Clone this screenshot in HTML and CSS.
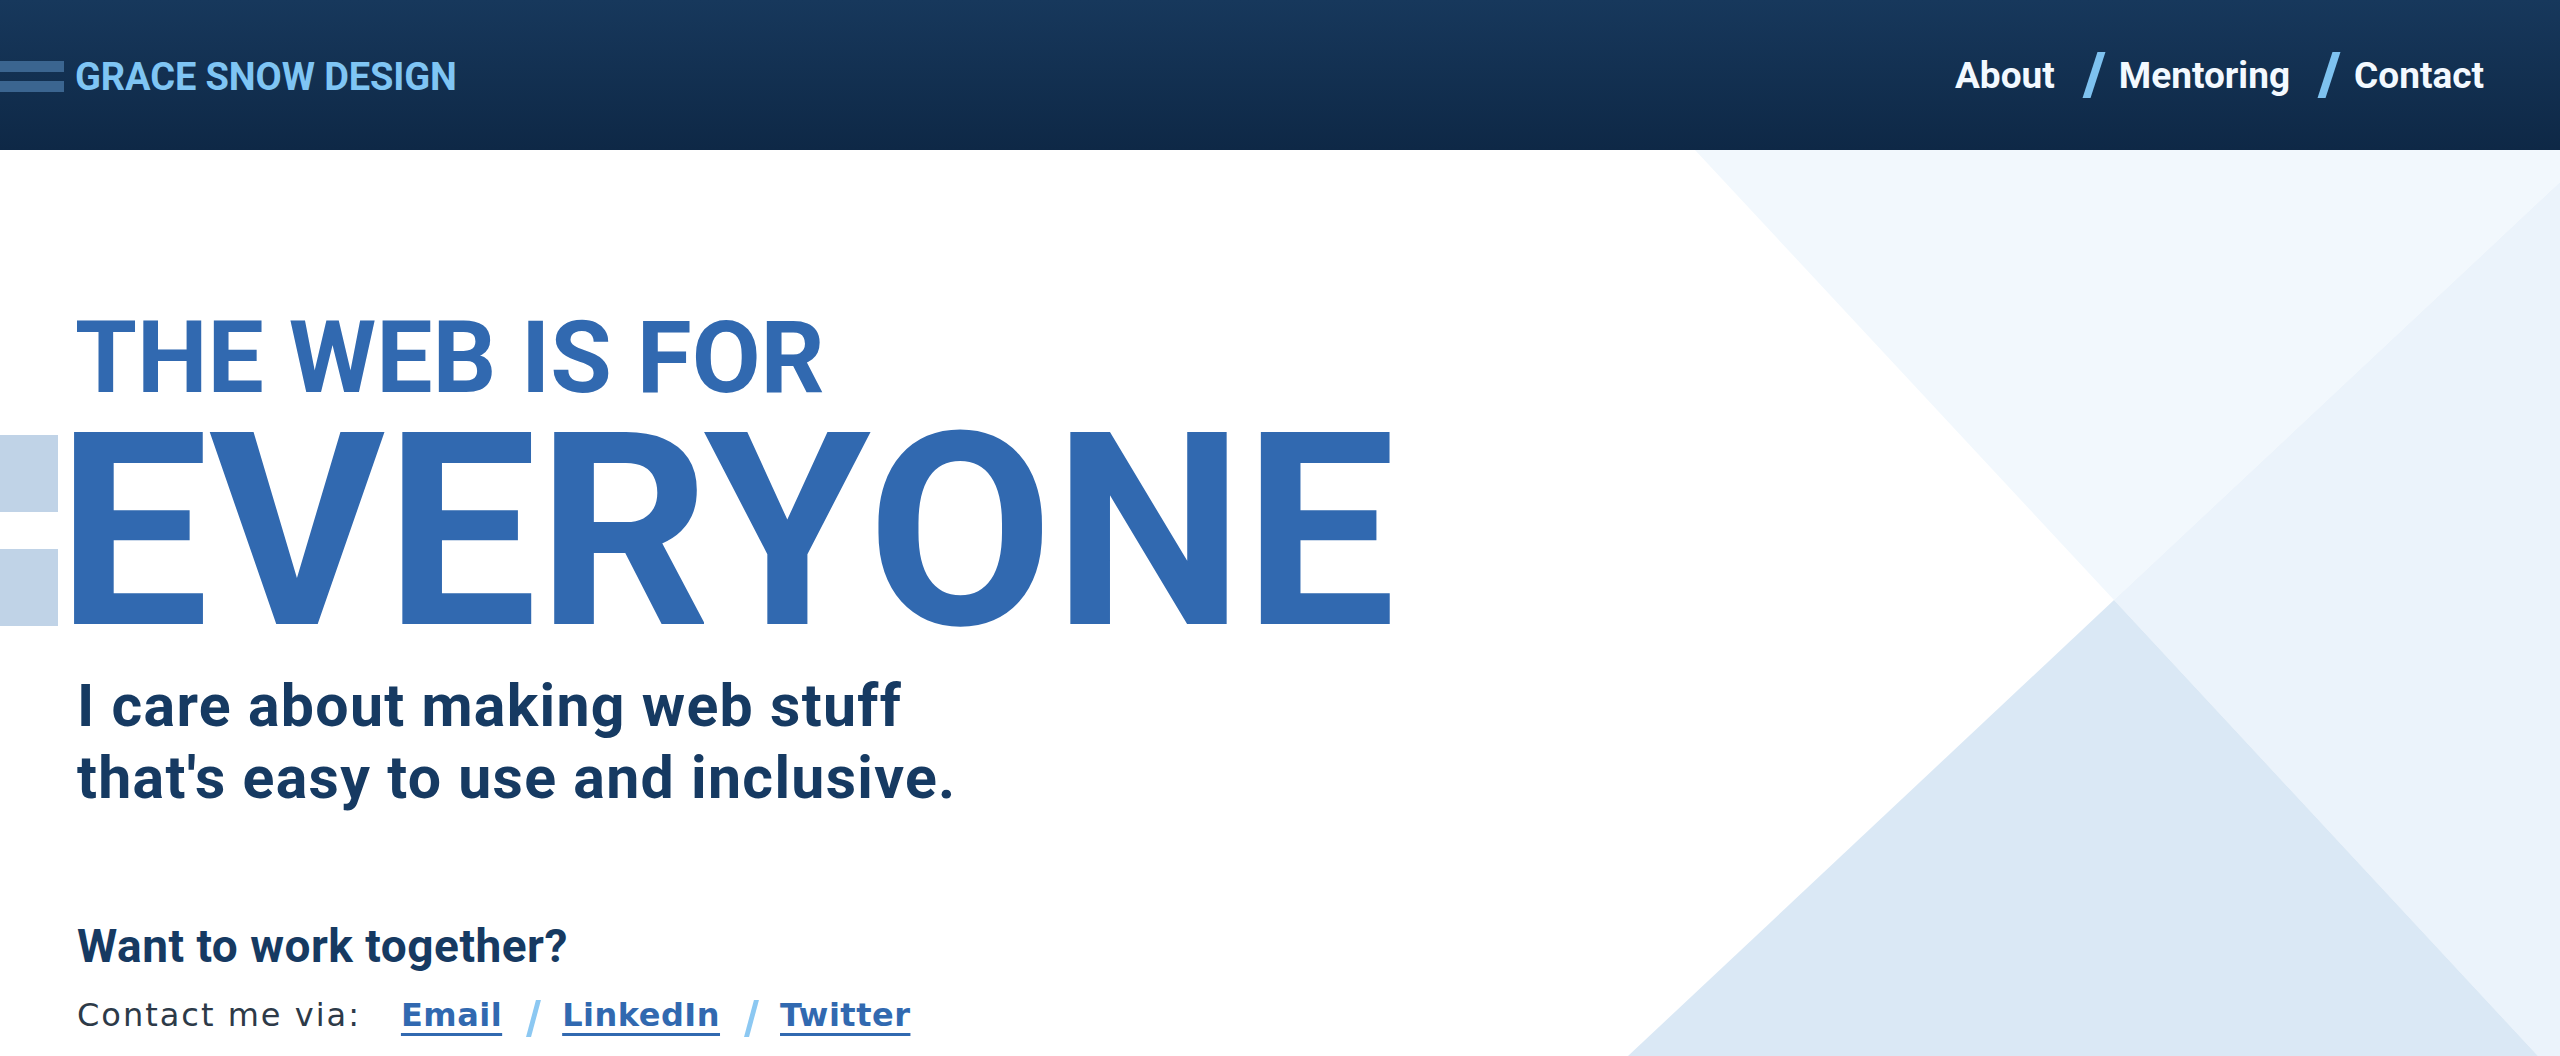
FILE: index.html
```html
<!DOCTYPE html>
<html lang="en">
<head>
<meta charset="utf-8">
<title>Grace Snow Design</title>
<link rel="stylesheet" href="styles.css">
</head>
<body>
<header class="site-header">
  <a class="brand" href="#">
    <span class="brand-bars"><span></span><span></span></span>
    <span class="brand-name">GRACE SNOW DESIGN</span>
  </a>
  <nav class="main-nav">
    <a href="#">About</a>
    <span class="nav-slash" aria-hidden="true"></span>
    <a href="#">Mentoring</a>
    <span class="nav-slash" aria-hidden="true"></span>
    <a href="#">Contact</a>
  </nav>
</header>
<main class="hero">
  <svg class="hero-bg" viewBox="0 0 932 906" aria-hidden="true">
    <polygon points="67,0 932,0 932,32 486,450" fill="#f2f8fd"/>
    <polygon points="932,32 486,450 910,906 932,906" fill="#ebf3fb"/>
    <polygon points="486,450 0,906 910,906" fill="#dae8f5"/>
  </svg>
  <div class="hero-content">
    <h1 class="headline">
      <span class="headline-top">THE WEB IS FOR</span>
      <span class="headline-main">
        <span class="deco" aria-hidden="true"><span></span><span></span></span>
        <span class="headline-word">EVERYONE</span>
      </span>
    </h1>
    <p class="lede">I care about making web stuff<br>that's easy to use and inclusive.</p>
    <h2 class="cta-title">Want to work together?</h2>
    <p class="cta-line">
      <span class="cta-label">Contact me via:</span>
      <a href="#">Email</a>
      <span class="cta-slash" aria-hidden="true"></span>
      <a href="#">LinkedIn</a>
      <span class="cta-slash" aria-hidden="true"></span>
      <a href="#">Twitter</a>
    </p>
  </div>
</main>
</body>
</html>
```

FILE: styles.css
```css
* {
  box-sizing: border-box;
}

html, body {
  margin: 0;
  padding: 0;
}

body {
  background: #ffffff;
  font-family: Roboto, "Noto Sans", sans-serif;
  overflow: hidden;
}

.site-header {
  height: 150px;
  display: flex;
  align-items: center;
  justify-content: space-between;
  padding-right: 76px;
  background: linear-gradient(180deg, #17385c 0%, #0e2846 100%);
}

.brand {
  display: flex;
  align-items: center;
  gap: 11px;
  text-decoration: none;
}

.brand-bars {
  display: flex;
  flex-direction: column;
  gap: 9px;
  width: 64px;
  margin-top: 2px;
}

.brand-bars span {
  display: block;
  height: 11px;
  background: #3b6590;
}

.brand-name {
  font-family: Roboto, sans-serif;
  font-weight: 700;
  font-size: 38px;
  line-height: 1;
  color: #7fc5f4;
  margin-top: 3px;
  letter-spacing: -0.1px;
}

.main-nav {
  display: flex;
  align-items: center;
}

.main-nav a {
  font-family: Roboto, sans-serif;
  font-weight: 700;
  font-size: 37px;
  line-height: 1;
  color: #f3f9ff;
  text-decoration: none;
}

.nav-slash {
  display: block;
  width: 8px;
  height: 46px;
  margin: 0 21px 0 35px;
  background: #7ec2f0;
  transform: skewX(-18deg);
}

.hero {
  position: relative;
  height: 906px;
  overflow: hidden;
}

.hero-bg {
  position: absolute;
  top: 0;
  right: 0;
  width: 932px;
  height: 906px;
}

.hero-content {
  position: relative;
  padding: 158px 0 0 77px;
}

.headline {
  margin: 0;
  font-family: Roboto, sans-serif;
  font-weight: 700;
  color: #3169b0;
}

.headline-top {
  display: block;
  font-size: 100px;
  line-height: 1;
  margin-left: -2px;
}

.headline-main {
  display: flex;
  align-items: flex-start;
  margin: -11px 0 0 -77px;
}

.deco {
  display: flex;
  flex-direction: column;
  gap: 37px;
  width: 58px;
  margin-top: 38px;
  flex: none;
}

.deco span {
  display: block;
  height: 77px;
  background: #c0d3e7;
}

.headline-word {
  font-size: 270px;
  line-height: 1;
  margin-left: -1px;
}

.lede {
  margin: 3px 0 0;
  font-family: Roboto, sans-serif;
  font-weight: 700;
  font-size: 59px;
  line-height: 72px;
  letter-spacing: 1.3px;
  color: #163a62;
}

.cta-title {
  margin: 105px 0 0;
  font-family: Roboto, sans-serif;
  font-weight: 700;
  font-size: 46px;
  line-height: 55px;
  letter-spacing: 0.5px;
  color: #163a62;
}

.cta-line {
  display: flex;
  align-items: center;
  margin: 18px 0 0;
  font-family: "DejaVu Sans", sans-serif;
  font-size: 32px;
  line-height: 38px;
  color: #2d3a48;
}

.cta-label {
  margin-right: 40px;
  letter-spacing: 2px;
}

.cta-line a {
  font-weight: 700;
  letter-spacing: 0.5px;
  color: #3169b0;
  text-decoration: underline;
  text-decoration-thickness: 3px;
  text-underline-offset: 7px;
}

.cta-slash {
  display: block;
  width: 5px;
  height: 37px;
  margin: 8px 26px 0 29px;
  background: #8cc8f2;
  transform: skewX(-15deg);
}
```
